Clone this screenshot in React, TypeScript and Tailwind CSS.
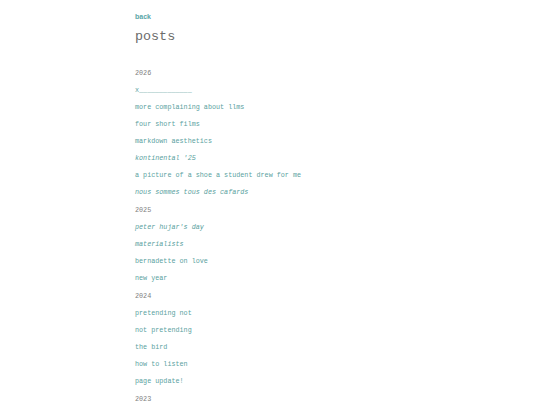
import React from 'react';

type Post = { title: string; italic?: boolean };

const years: { year: string; posts: Post[] }[] = [
    {
        year: '2026',
        posts: [
            { title: 'x_____________' },
            { title: 'more complaining about llms' },
            { title: 'four short films' },
            { title: 'markdown aesthetics' },
            { title: "kontinental '25", italic: true },
            { title: 'a picture of a shoe a student drew for me' },
            { title: 'nous sommes tous des cafards', italic: true },
        ],
    },
    {
        year: '2025',
        posts: [
            { title: "peter hujar's day", italic: true },
            { title: 'materialists', italic: true },
            { title: 'bernadette on love' },
            { title: 'new year' },
        ],
    },
    {
        year: '2024',
        posts: [
            { title: 'pretending not' },
            { title: 'not pretending' },
            { title: 'the bird' },
            { title: 'how to listen' },
            { title: 'page update!' },
        ],
    },
    { year: '2023', posts: [] },
];

const mono = { fontFamily: '"Liberation Mono", "DejaVu Sans Mono", monospace' };

export default function App() {
    return (
        <div className="min-h-[405px] bg-white">
            <div className="mx-auto w-[270px] pt-[11px]" style={mono}>
                <a
                    href="#"
                    className="block text-[7px] leading-[12px] font-semibold text-[#5aa6a7]"
                    style={{ fontFamily: '"Liberation Sans", Arial, sans-serif' }}
                >
                    back
                </a>
                <h1 className="mt-[6px] text-[13.4px] leading-[16px] text-[#6b6b6b]">posts</h1>
                <div className="mt-[19px] flex flex-col">
                    {years.map((y) => (
                        <div key={y.year} className="flex flex-col">
                            <div className="mt-[1px] text-[6.75px] leading-[17px] text-[#808080]">{y.year}</div>
                            {y.posts.map((p) => (
                                <a
                                    key={p.title}
                                    href="#"
                                    className={`block text-[6.75px] leading-[17px] text-[#5a9fa0] ${p.italic ? 'italic' : ''}`}
                                >
                                    {p.title}
                                </a>
                            ))}
                        </div>
                    ))}
                </div>
            </div>
        </div>
    );
}
